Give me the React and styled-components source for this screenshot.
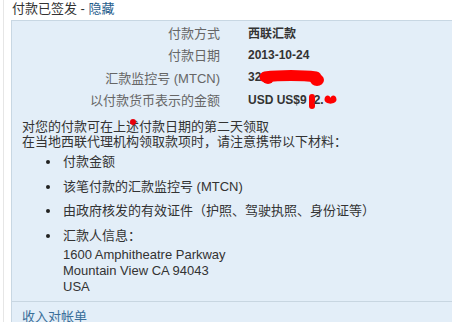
import React from "react";
import styled, { createGlobalStyle } from "styled-components";

const Global = createGlobalStyle`
  html, body { margin: 0; padding: 0; background: #fff; }
  body {
    font-family: "Liberation Sans", Arial, "Noto Sans CJK SC", sans-serif;
    font-size: 13px;
    color: #333;
  }
`;

const Page = styled.div`
  margin-left: 3px;
  border-left: 1px solid #e6e6e6;
  padding-left: 7px;
  min-height: 322px;
  overflow: hidden;
`;

const Header = styled.div`
  height: 20px;
  line-height: 18px;
  padding-left: 1px;
  color: #333;
  white-space: nowrap;
`;

const Link = styled.a`
  color: ${(p) => p.$tone || "#1f5c8c"};
  text-decoration: none;
  cursor: pointer;
`;

const Panel = styled.div`
  background: #e3eef8;
  border-top: 1px solid #c8d7e3;
  border-left: 1px solid #c8d7e3;
`;

const Body = styled.div`
  padding-bottom: 6px;
`;

const Details = styled.div`
  display: grid;
  grid-template-columns: 208px 1fr;
  grid-auto-rows: 22.5px;
  column-gap: 28px;
  align-items: center;
`;

const Label = styled.div`
  text-align: right;
  color: #666;
  white-space: nowrap;
`;

const Value = styled.div`
  font-size: 12px;
  font-weight: bold;
  color: #333;
  white-space: nowrap;
  display: flex;
  align-items: center;
  height: 100%;
  overflow: visible;
`;

const Redact = styled.svg`
  display: block;
  flex: none;
  overflow: visible;
  margin-left: ${(p) => p.$ml || 0}px;
  margin-right: ${(p) => p.$mr || 0}px;
  margin-top: ${(p) => p.$mt || 0}px;
`;

const Para = styled.p`
  margin: 8px 0 0 10px;
  line-height: 15px;
`;

const Marked = styled.span`
  position: relative;
  &::after {
    content: "";
    position: absolute;
    left: 4px;
    top: 0px;
    width: 6px;
    height: 6px;
    border-radius: 50%;
    background: #e8000b;
  }
`;

const List = styled.ul`
  list-style: none;
  margin: 5px 0 0 0;
  padding: 0 0 0 51px;
`;

const Item = styled.li`
  position: relative;
  line-height: 16px;
  margin-bottom: 8.5px;
  &:last-child { margin-bottom: 0; }
  &::before {
    content: "";
    position: absolute;
    left: -17px;
    top: 6px;
    width: 4px;
    height: 4px;
    border-radius: 50%;
    background: #222;
  }
`;

const Address = styled.div`
  margin-top: 3.5px;
  line-height: 16px;
`;

const Footer = styled.div`
  border-top: 1px solid #c8d6e1;
  padding: 7px 0 0 10px;
  line-height: 16px;
  height: 30px;
`;

const rows = [
  { label: "付款方式", value: "西联汇款" },
  { label: "付款日期", value: "2013-10-24" },
  { label: "汇款监控号 (MTCN)", value: "mtcn" },
  { label: "以付款货币表示的金额", value: "amount" },
];

function renderValue(v) {
  if (v === "mtcn") {
    return (
      <>
        32
        <Redact width="66" height="16" viewBox="0 0 66 16" $ml={-1} $mt={2}>
          <path d="M5 7 C 20 5, 42 5, 56 7" stroke="#f00" strokeWidth="11" strokeLinecap="round" fill="none" />
          <ellipse cx="57" cy="10" rx="7" ry="6" fill="#f00" />
          <ellipse cx="8" cy="8" rx="6" ry="6" fill="#f00" />
        </Redact>
      </>
    );
  }
  if (v === "amount") {
    return (
      <>
        USD US$9
        <Redact width="6" height="15" viewBox="0 0 6 15" $ml={2} $mr={-1} $mt={4}>
          <rect x="0" y="0" width="6" height="15" rx="3" fill="#f00" />
        </Redact>
        2.
        <Redact width="13" height="10" viewBox="0 0 13 10" $ml={0}>
          <path d="M0.5 4.5 C 0.5 -0.5, 6 -0.5, 6.5 3 C 7 -0.5, 12.5 -0.5, 12.5 4.5 C 12.5 10, 0.5 10, 0.5 4.5 Z" fill="#f00" />
        </Redact>
      </>
    );
  }
  return v;
}

export default function App() {
  return (
    <>
      <Global />
      <Page>
        <Header>
          付款已签发 - <Link>隐藏</Link>
        </Header>
        <Panel>
          <Body>
            <Details>
              {rows.map((r) => (
                <React.Fragment key={r.label}>
                  <Label>{r.label}</Label>
                  <Value>{renderValue(r.value)}</Value>
                </React.Fragment>
              ))}
            </Details>
            <Para>
              对您的付款可在上<Marked>述</Marked>付款日期的第二天领取
              <br />
              在当地西联代理机构领取款项时，请注意携带以下材料：
            </Para>
            <List>
              <Item>付款金额</Item>
              <Item>该笔付款的汇款监控号 (MTCN)</Item>
              <Item>由政府核发的有效证件（护照、驾驶执照、身份证等）</Item>
              <Item>
                汇款人信息：
                <Address>
                  1600 Amphitheatre Parkway
                  <br />
                  Mountain View CA 94043
                  <br />
                  USA
                </Address>
              </Item>
            </List>
          </Body>
          <Footer>
            <Link $tone="#3a6e9a">收入对帐单</Link>
          </Footer>
        </Panel>
      </Page>
    </>
  );
}
